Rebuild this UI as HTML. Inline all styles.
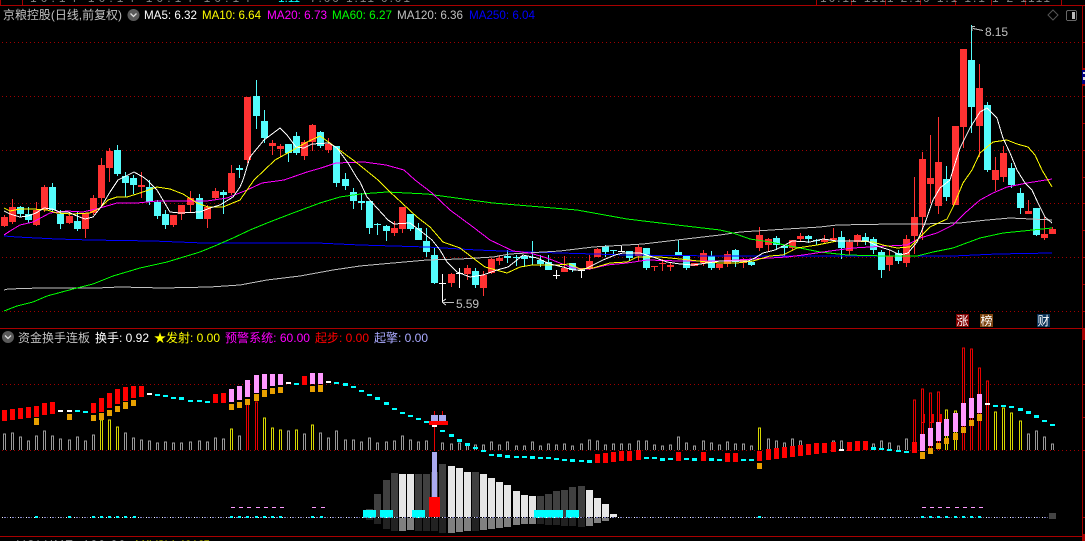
<!DOCTYPE html>
<html><head><meta charset="utf-8"><style>
html,body{margin:0;padding:0;background:#000;width:1085px;height:541px;overflow:hidden}
svg{display:block}
text{font-family:"Liberation Sans","WenQuanYi Zen Hei","Noto Sans CJK SC",sans-serif;font-size:12px}
</style></head><body>
<svg width="1085" height="541" viewBox="0 0 1085 541" xmlns="http://www.w3.org/2000/svg">
<defs>
<pattern id="g" x="2" y="0" width="4" height="1" patternUnits="userSpaceOnUse"><rect x="0" y="0" width="1" height="1" fill="#a00000"/></pattern>
<pattern id="b" x="0" y="0" width="8" height="1" patternUnits="userSpaceOnUse"><rect x="2" y="0" width="1" height="1" fill="#fff"/><rect x="4" y="0" width="2" height="1" fill="#8080c8"/><rect x="7" y="0" width="1" height="1" fill="#606080"/></pattern>
</defs>
<rect width="1085" height="541" fill="#000"/>
<g shape-rendering="crispEdges">
<!-- frame -->
<path d="M0 5.5H1085M0.5 0V5M22.5 0V5M816.5 0V5M851.5 0V5M885.5 0V5M920.5 0V5M955.5 0V5M991.5 0V5M1025.5 0V5M1061.5 0V5M0 328.5H1082M0 536.5H1085M1082.5 5V541" stroke="#a80000" fill="none"/>
<path d="M1083 328h2v12h-2zM1083 534h2v7h-2zM1082 68h3v2h-3zM1082 84h3v2h-3z" fill="#a80000"/>
<rect x="1082" y="70" width="3" height="14" fill="#000080"/><rect x="1083" y="72" width="2" height="2" fill="#ddd"/><rect x="1083" y="77" width="2" height="3" fill="#ddd"/>
<!-- grid -->
<rect x="2" y="42" width="1080" height="1" fill="url(#g)"/>
<rect x="2" y="96" width="1080" height="1" fill="url(#g)"/>
<rect x="2" y="150" width="1080" height="1" fill="url(#g)"/>
<rect x="2" y="203" width="1080" height="1" fill="url(#g)"/>
<rect x="2" y="257" width="1080" height="1" fill="url(#g)"/>
<rect x="2" y="311" width="1080" height="1" fill="url(#g)"/>
<rect x="2" y="384" width="1080" height="1" fill="url(#g)"/>
<rect x="2" y="450" width="1080" height="1" fill="url(#g)"/>
<path d="M1083 42.5h2M1083 69.5h2M1083 96.5h2M1083 123.5h2M1083 150.5h2M1083 177.5h2M1083 203.5h2M1083 230.5h2M1083 257.5h2M1083 284.5h2M1083 311.5h2M1083 384.5h2M1083 417.5h2M1083 450.5h2M1083 517.5h2" stroke="#a00000" fill="none"/>

<!-- red wicks -->
<path stroke="#ff3232" fill="none" d="M4.5 215V227M12.5 199V224M36.5 202V226M44.5 185V212M69.5 212V224M85.5 213V238M93.5 195V215M101.5 158V208M109.5 148V182M141.5 172V198M173.5 215V227M181.5 205V220M190.5 191V212M207.5 205V228M215.5 188V200M231.5 165V195M247.5 97V163M272.5 140V155M280.5 144V157M304.5 140V160M312.5 124V151M328.5 138V153M394.5 221V236M402.5 207V233M451.5 273V287M467.5 265V280M483.5 271V296M491.5 258V274M499.5 255V265M564.5 256V272M589.5 255V270M597.5 248V257M638.5 244V261M654.5 266V271M662.5 259V271M670.5 262V271M694.5 263V266M703.5 250V266M719.5 264V270M727.5 251V267M743.5 258V268M759.5 227V251M768.5 238V251M792.5 240V251M800.5 233V241M824.5 235V243M833.5 228V240M849.5 239V255M857.5 234V246M889.5 250V271M906.5 235V267M914.5 177V254M922.5 152V240M930.5 135V203M938.5 117V214M955.5 126V205M963.5 49V148M979.5 64V157M995.5 157V191M1003.5 146V182M1028.5 200V214M1044.5 217V240M1052.5 227V234"/>
<!-- red bodies -->
<path fill="#ff3232" d="M1 217h7v9h-7zM9 207h7v15h-7zM33 210h7v15h-7zM41 187h7v23h-7zM66 216h7v7h-7zM82 213h7v16h-7zM90 198h7v15h-7zM98 165h7v33h-7zM106 151h7v17h-7zM138 185h7v2h-7zM170 215h7v10h-7zM178 205h7v9h-7zM187 198h7v7h-7zM204 207h7v12h-7zM212 191h7v7h-7zM228 173h7v20h-7zM244 97h7v63h-7zM269 143h7v3h-7zM277 146h7v3h-7zM301 142h7v14h-7zM309 125h7v17h-7zM325 144h7v6h-7zM391 228h7v5h-7zM399 207h7v22h-7zM448 274h7v9h-7zM464 268h7v6h-7zM480 275h7v13h-7zM488 259h7v14h-7zM496 258h7v3h-7zM561 268h7v4h-7zM586 261h7v7h-7zM594 249h7v8h-7zM635 247h7v9h-7zM651 266h7v1h-7zM659 263h7v1h-7zM667 265h7v2h-7zM691 263h7v3h-7zM700 253h7v10h-7zM716 264h7v4h-7zM724 254h7v10h-7zM740 259h7v4h-7zM756 235h7v13h-7zM765 239h7v6h-7zM789 240h7v8h-7zM797 236h7v3h-7zM821 239h7v3h-7zM830 238h7v2h-7zM846 242h7v9h-7zM854 235h7v7h-7zM886 256h7v9h-7zM903 239h7v24h-7zM911 217h7v19h-7zM919 159h7v58h-7zM927 178h7v6h-7zM935 162h7v44h-7zM952 126h7v79h-7zM960 49h7v78h-7zM976 88h7v38h-7zM992 170h7v10h-7zM1000 153h7v24h-7zM1025 211h7v3h-7zM1041 234h7v4h-7zM1049 229h7v5h-7z"/>
<!-- cyan wicks -->
<path stroke="#54fcfc" fill="none" d="M20.5 206V217M28.5 207V223M52.5 183V212M60.5 210V229M77.5 212V231M117.5 145V176M125.5 172V197M133.5 175V194M149.5 180V205M157.5 200V219M165.5 210V229M199.5 194V219M223.5 190V214M239.5 165V178M256.5 80V129M264.5 110V143M288.5 144V162M296.5 132V155M320.5 131V148M336.5 146V187M345.5 173V190M353.5 188V209M361.5 193V210M369.5 201V234M377.5 223V235M386.5 225V241M410.5 214V231M418.5 223V240M426.5 228V257M434.5 248V284M475.5 268V288M507.5 250V263M516.5 255V266M524.5 255V267M532.5 241V265M540.5 255V267M548.5 255V270M572.5 263V272M605.5 245V257M613.5 250V256M629.5 251V261M646.5 248V270M678.5 240V255M686.5 255V270M711.5 251V270M735.5 249V267M751.5 261V266M776.5 236V250M784.5 245V257M808.5 235V243M816.5 239V245M841.5 231V259M865.5 233V245M873.5 237V254M881.5 250V278M898.5 250V264M946.5 166V201M971.5 25V133M987.5 102V172M1011.5 163V188M1020.5 188V214M1036.5 208V236"/>
<!-- cyan bodies -->
<path fill="#54fcfc" d="M17 207h7v7h-7zM25 214h7v6h-7zM49 187h7v23h-7zM57 214h7v10h-7zM74 221h7v8h-7zM114 150h7v24h-7zM122 176h7v7h-7zM130 178h7v7h-7zM146 187h7v15h-7zM154 202h7v14h-7zM162 214h7v11h-7zM196 198h7v21h-7zM220 192h7v3h-7zM236 168h7v2h-7zM253 96h7v20h-7zM261 121h7v17h-7zM285 144h7v9h-7zM293 136h7v17h-7zM317 132h7v14h-7zM333 146h7v37h-7zM342 179h7v7h-7zM350 192h7v9h-7zM358 201h7v2h-7zM366 201h7v27h-7zM374 224h7v1h-7zM383 226h7v5h-7zM407 214h7v15h-7zM415 228h7v12h-7zM423 241h7v11h-7zM431 255h7v28h-7zM472 271h7v14h-7zM504 256h7v2h-7zM513 257h7v1h-7zM521 256h7v3h-7zM529 257h7v1h-7zM537 260h7v4h-7zM545 262h7v8h-7zM569 263h7v7h-7zM602 246h7v6h-7zM610 250h7v1h-7zM626 251h7v7h-7zM643 248h7v20h-7zM675 252h7v3h-7zM683 256h7v12h-7zM708 256h7v12h-7zM732 250h7v12h-7zM748 262h7v3h-7zM773 238h7v7h-7zM781 246h7v2h-7zM805 236h7v3h-7zM813 240h7v1h-7zM838 237h7v11h-7zM862 237h7v5h-7zM870 239h7v11h-7zM878 252h7v18h-7zM895 253h7v8h-7zM943 179h7v18h-7zM968 60h7v47h-7zM984 105h7v65h-7zM1008 168h7v17h-7zM1017 193h7v15h-7zM1033 208h7v27h-7z"/>
<!-- white cross candles -->
<path stroke="#fff" fill="none" d="M442.5 274V302M439 283.5h7M459.5 268V288M456 273.5h7M556.5 270V279M553 275.5h7M581.5 268V278M578 270.5h7M621.5 245V252M618 251.5h7"/>

<!-- MA250 -->
<polyline fill="none" stroke="#0000ff" points="4,236 17,237 57,239 90,240 153,241 203,243 317,243 360,245 427,247 477,250 527,252 627,255 720,256 953,256 997,254 1052,253"/>
<!-- MA120 -->
<polyline fill="none" stroke="#c0c0c0" points="4,290 8,289 40,288 97,288 120,287 163,288 210,287 240,285 267,280 300,276 333,270 360,266 393,263 427,260 460,259 493,257 510,254 560,251 593,247 643,244 677,240 720,235 740,232 787,229 820,227 837,225 893,224 920,224 960,223 987,220 1010,218 1052,220"/>
<!-- MA60 -->
<polyline fill="none" stroke="#00ff00" points="4,311 17,306 33,302 47,296 73,289 93,284 113,276 140,268 167,262 200,252 217,245 233,238 250,230 267,223 293,213 320,203 340,197 360,194 387,192 427,194 493,203 577,210 627,219 677,225 720,230 733,233 750,239 770,242 800,248 820,252 847,255 887,256 917,256 933,252 953,248 980,238 1003,233 1023,231 1052,228"/>
<!-- MA20 -->
<polyline fill="none" stroke="#ff00ff" points="4,235 10,231 20,225 33,222 50,213 67,211 83,212 100,208 117,203 137,203 157,201 187,201 207,201 227,198 247,190 262,183 284,180 307,172 321,168 336,163 364,162 386,165 404,170 415,180 432,193 450,210 473,227 490,240 513,251 530,253 547,258 560,263 573,268 590,269 607,265 627,263 647,260 680,261 720,261 753,259 787,257 803,255 830,251 853,248 887,246 907,245 920,238 937,233 953,225 965,213 980,200 993,193 1007,187 1027,183 1052,179"/>
<!-- MA10 -->
<polyline fill="none" stroke="#ffff00" points="4,208 10,211 20,209 33,209 47,210 57,213 72,214 90,213 100,208 108,200 117,197 127,197 140,193 157,187 170,189 183,194 197,203 208,207 223,207 240,200 247,190 254,180 275,160 293,150 307,142 320,136 330,143 357,163 378,180 390,192 402,203 417,217 430,227 443,242 460,248 473,258 485,267 507,273 520,267 532,265 557,265 570,264 580,269 593,268 610,263 627,262 637,257 660,257 680,259 707,262 720,263 737,263 753,261 770,256 783,255 797,248 817,245 837,241 857,241 873,242 883,245 897,248 910,247 917,240 930,227 947,219 953,207 963,183 972,170 980,153 993,142 1007,140 1017,144 1028,147 1035,155 1042,170 1052,187"/>
<!-- MA5 -->
<polyline fill="none" stroke="#ffffff" points="4,211 10,214 20,217 28,216 36,213 44,208 52,209 60,212 68,212 77,216 85,219 93,217 101,207 110,192 118,180 134,172 143,177 147,180 157,190 170,212 180,213 200,212 210,208 220,205 233,197 240,187 243,180 250,157 264,140 280,128 287,135 296,147 304,148 312,144 329,143 337,148 348,163 357,178 360,182 367,197 377,208 388,220 394,224 410,223 422,232 432,240 440,250 447,262 457,272 470,277 483,275 497,270 508,267 517,260 523,255 537,258 550,264 563,267 573,270 583,270 593,265 603,260 615,255 623,253 640,253 653,257 667,262 680,264 693,265 707,263 720,261 733,261 748,261 755,258 763,253 775,250 785,245 792,241 810,242 823,239 837,241 853,241 867,241 880,247 890,250 900,255 908,253 917,242 925,223 933,200 940,188 950,180 953,170 960,148 970,128 980,112 987,108 997,118 1003,138 1010,153 1017,170 1025,183 1032,190 1038,203 1045,217 1052,223"/>

<!-- high/low arrows -->
<path stroke="#c0c0c0" fill="none" d="M972 26.5h3M972 26V31M973 28.5l10 2M442.5 302V303M443 302.5h11M443 301l3-2M443 303l3 2"/>

<!-- tags -->
<rect x="956" y="314" width="13" height="13" fill="#800000"/><rect x="980" y="314" width="13" height="13" fill="#7c4410"/><rect x="1037" y="314" width="13" height="13" fill="#0c3458"/>

<!-- icons -->
<path d="M1053 10l5 5-5 5-5-5z" stroke="#555" fill="none" shape-rendering="auto"/>
<rect x="1066.5" y="10.5" width="10" height="10" rx="1.5" stroke="#666" fill="none"/><rect x="1072" y="12" width="3" height="7" fill="#bbb"/>

<!-- indicator outline bars -->
<path stroke="#999" fill="none" d="M3.5 450V434h2v16M11.5 450V433h2v17M19.5 450V437h2v13M27.5 450V441h2v9M35.5 450V436h2v14M43.5 450V431h2v19M51.5 450V436h2v14M59.5 450V439h2v11M68.5 450V440h2v10M76.5 450V437h2v13M84.5 450V441h2v9M92.5 450V435h2v15M124.5 450V433h2v17M132.5 450V438h2v12M140.5 450V440h2v10M148.5 450V441h2v9M156.5 450V443h2v7M164.5 450V442h2v8M172.5 450V443h2v7M180.5 450V443h2v7M189.5 450V442h2v8M198.5 450V441h2v9M206.5 450V442h2v8M214.5 450V438h2v12M222.5 450V439h2v11M238.5 450V436h2v14M287.5 450V431h2v19M303.5 450V434h2v16M319.5 450V433h2v17M327.5 450V438h2v12M335.5 450V431h2v19M344.5 450V440h2v10M352.5 450V440h2v10M360.5 450V442h2v8M368.5 450V438h2v12M376.5 450V443h2v7M385.5 450V442h2v8M393.5 450V441h2v9M401.5 450V436h2v14M409.5 450V440h2v10M417.5 450V442h2v8M425.5 450V441h2v9M441.5 450V443h2v7M450.5 450V444h2v6M458.5 450V443h2v7M466.5 450V445h2v5M474.5 450V445h2v5M482.5 450V445h2v5M490.5 450V442h2v8M498.5 450V445h2v5M506.5 450V442h2v8M515.5 450V446h2v4M523.5 450V446h2v4M531.5 450V442h2v8M539.5 450V446h2v4M547.5 450V444h2v6M555.5 450V445h2v5M563.5 450V444h2v6M571.5 450V446h2v4M580.5 450V444h2v6M588.5 450V440h2v10M596.5 450V441h2v9M604.5 450V445h2v5M612.5 450V444h2v6M620.5 450V444h2v6M628.5 450V444h2v6M637.5 450V441h2v9M645.5 450V441h2v9M653.5 450V445h2v5M661.5 450V446h2v4M669.5 450V445h2v5M677.5 450V437h2v13M685.5 450V443h2v7M693.5 450V446h2v4M702.5 450V441h2v9M710.5 450V443h2v7M718.5 450V445h2v5M726.5 450V442h2v8M734.5 450V444h2v6M742.5 450V444h2v6M750.5 450V446h2v4M767.5 450V439h2v11M775.5 450V441h2v9M783.5 450V443h2v7M791.5 450V439h2v11M799.5 450V441h2v9M807.5 450V445h2v5M815.5 450V445h2v5M823.5 450V445h2v5M832.5 450V441h2v9M840.5 450V441h2v9M848.5 450V445h2v5M856.5 450V445h2v5M864.5 450V445h2v5M872.5 450V444h2v6M880.5 450V441h2v9M888.5 450V443h2v7M897.5 450V446h2v4M905.5 450V439h2v11M1027.5 450V434h2v16M1035.5 450V431h2v19M1043.5 450V437h2v13M1051.5 450V444h2v6"/>
<path stroke="#d8d800" fill="none" d="M100.5 450V420h2v30M108.5 450V420h2v30M116.5 450V427h2v23M230.5 450V429h2v21M263.5 450V418h2v32M271.5 450V428h2v22M279.5 450V430h2v20M295.5 450V430h2v20M311.5 450V425h2v25M758.5 450V428h2v22M945.5 450V410h2v40M954.5 450V411h2v39M994.5 450V412h2v38M1002.5 450V408h2v42M1010.5 450V413h2v37M1019.5 450V421h2v29"/>
<path stroke="#e80000" fill="none" d="M246.5 450V400h2v50M255.5 450V402h2v48M913.5 450V400h2v50M921.5 450V389h2v61M929.5 450V393h2v57M937.5 450V392h2v58M962.5 450V348h2v102M970.5 450V349h2v101M978.5 450V368h2v82M986.5 450V381h2v69M434.5 411V451M442.5 411V415"/>
<path fill="#e80000" d="M923 414h2v8h-2zM921 422h4v1h-4zM932 414h2v8h-2zM930 422h4v1h-4zM940 414h2v8h-2zM938 422h4v1h-4zM965 414h1v8h-1zM963 422h3v1h-3z"/>

<!-- indicator red blocks -->
<path fill="#ff0000" d="M2 410h5v11h-5zM10 409h5v11h-5zM18 408h5v11h-5zM26 407h5v11h-5zM34 406h5v11h-5zM42 403h5v12h-5zM50 402h5v12h-5zM91 403h5v10h-5zM99 398h5v14h-5zM107 393h5v15h-5zM115 389h5v15h-5zM123 387h5v14h-5zM131 386h5v12h-5zM139 386h5v11h-5zM213 394h5v9h-5zM221 393h5v10h-5zM302 376h5v9h-5zM595 454h5v9h-5zM603 453h5v10h-5zM611 452h5v10h-5zM619 451h5v10h-5zM627 451h5v10h-5zM636 450h5v10h-5zM676 452h5v9h-5zM701 452h5v9h-5zM725 453h5v9h-5zM733 453h5v9h-5zM757 451h5v10h-5zM766 449h5v11h-5zM774 448h5v11h-5zM782 447h5v11h-5zM790 446h5v11h-5zM798 445h5v11h-5zM806 444h5v11h-5zM814 443h5v11h-5zM822 443h5v10h-5zM831 442h5v10h-5zM847 442h5v9h-5zM855 441h5v10h-5zM863 441h5v9h-5zM912 442h5v11h-5z"/>
<!-- orange -->
<path fill="#e8a000" d="M34 418h5v7h-5zM67 414h5v6h-5zM91 415h5v6h-5zM99 413h5v7h-5zM107 410h5v6h-5zM115 406h5v6h-5zM123 402h5v7h-5zM131 400h5v6h-5zM229 404h5v6h-5zM237 402h5v6h-5zM245 399h5v6h-5zM254 394h5v7h-5zM262 390h5v7h-5zM270 388h5v6h-5zM278 387h5v6h-5zM310 386h5v6h-5zM318 385h5v7h-5zM757 463h5v6h-5zM920 452h5v7h-5zM928 448h5v6h-5zM936 443h5v6h-5zM944 438h5v6h-5zM953 433h5v7h-5zM961 427h5v6h-5zM969 420h5v6h-5zM977 414h5v7h-5z"/>
<!-- pink -->
<path fill="#ff99ff" d="M229 389h5v13h-5zM237 386h5v14h-5zM245 380h5v17h-5zM254 375h5v18h-5zM262 374h5v15h-5zM270 374h5v12h-5zM278 374h5v11h-5zM310 373h5v11h-5zM318 373h5v11h-5zM920 434h5v17h-5zM928 428h5v18h-5zM936 422h5v19h-5zM944 419h5v17h-5zM953 413h5v19h-5zM961 403h5v23h-5zM969 398h5v20h-5zM977 394h5v19h-5z"/>
<!-- cyan dashes -->
<path stroke="#00ffff" stroke-width="2" fill="none" d="M75 411h5M83 412h5M155 395h5M163 396h5M171 398h5M188 401h5M197 401h5M205 402h5M294 384h5M334 383h5M351 387h5M359 391h5M367 395h5M392 409h5M400 413h5M408 416h5M416 419h5M424 422h5M440 431h5M473 448h5M481 451h5M489 455h5M514 457h5M522 457h5M538 458h5M546 458h5M554 459h5M562 460h5M579 461h5M644 458h5M652 458h5M668 459h5M684 459h5M717 460h5M741 460h5M749 460h5M879 449h5M887 450h5M896 451h5M904 452h5M993 406h5M1001 406h5M1009 407h5M1042 421h5M1050 425h5"/>
<path stroke="#00ffff" stroke-width="3" fill="none" d="M179 398.5h5M343 384.5h5M375 398.5h5M384 403.5h5M449 435.5h5M457 440.5h5M465 444.5h5M497 455.5h5M505 456.5h5M530 457.5h5M570 460.5h5M587 461.5h5M660 459.5h5M692 459.5h5M709 459.5h5M871 448.5h5M1018 409.5h5M1026 412.5h5M1034 416.5h5"/>
<path stroke="#fff" stroke-width="2" fill="none" d="M58 411h5M67 411h5M147 394h5M286 383h5M326 382h5M432 426h5M839 450h5M985 404h5"/>

<!-- histogram -->
<path fill="#404040" d="M366 509h7v8h-7zM374 494h7v23h-7zM383 480h7v37h-7zM391 473h7v44h-7zM415 474h7v43h-7zM423 474h7v43h-7zM431 472h7v45h-7zM439 464h7v53h-7zM472 472h7v45h-7zM537 496h7v21h-7zM545 494h7v23h-7zM553 491h7v26h-7zM561 490h7v27h-7zM569 487h7v30h-7zM578 486h7v31h-7z"/>
<path fill="#e6e6e6" d="M399 474h7v43h-7zM407 474h7v43h-7zM448 466h7v51h-7zM456 468h7v49h-7zM464 472h7v45h-7zM480 474h7v43h-7zM488 478h7v39h-7zM496 482h7v35h-7zM504 485h7v32h-7zM513 491h7v26h-7zM521 495h7v22h-7zM529 496h7v21h-7zM586 490h7v27h-7zM594 498h7v19h-7zM602 504h7v13h-7zM610 514h7v3h-7z"/>
<path fill="#808080" d="M399 518h7v13h-7zM407 518h7v12h-7zM448 518h7v15h-7zM456 518h7v14h-7zM464 518h7v13h-7zM480 518h7v12h-7zM488 518h7v11h-7zM496 518h7v10h-7zM504 518h7v9h-7zM513 518h7v7h-7zM521 518h7v6h-7zM529 518h7v6h-7zM586 518h7v8h-7zM594 518h7v5h-7zM602 518h7v3h-7z"/>
<path fill="#222" d="M366 518h7v2h-7zM374 518h7v6h-7zM383 518h7v11h-7zM391 518h7v13h-7zM415 518h7v13h-7zM423 518h7v13h-7zM431 518h7v13h-7zM439 518h7v15h-7zM472 518h7v13h-7zM537 518h7v6h-7zM545 518h7v7h-7zM553 518h7v7h-7zM561 518h7v8h-7zM569 518h7v8h-7zM578 518h7v9h-7z"/>
<path fill="#00ffff" d="M363 510h13v8h-13zM380 510h13v8h-13zM412 510h13v8h-13zM534 510h29v8h-29zM566 510h13v8h-13z"/>
<!-- special column -->
<path fill="#aaaaf0" d="M431 415h7v6h-7zM439 415h7v6h-7zM432 452h5v45h-5z"/>
<path fill="#ff0000" d="M429 421h19v4h-19zM429 497h11v20h-11z"/>
<rect x="432" y="425" width="5" height="1" fill="#fff"/>
<!-- baseline -->
<rect x="0" y="517" width="1050" height="1" fill="url(#b)"/>
<rect x="1049" y="513" width="7" height="6" fill="#444"/>
<path fill="#00ffff" d="M35 516h3v2h-3zM68 516h3v2h-3zM92 516h3v2h-3zM100 516h3v2h-3zM108 516h3v2h-3zM116 516h3v2h-3zM124 516h3v2h-3zM133 516h3v2h-3zM230 516h3v2h-3zM238 516h3v2h-3zM246 516h3v2h-3zM255 516h3v2h-3zM263 516h3v2h-3zM271 516h3v2h-3zM279 516h3v2h-3zM311 516h3v2h-3zM320 516h3v2h-3zM758 516h3v2h-3zM921 516h3v2h-3zM929 516h3v2h-3zM937 516h3v2h-3zM945 516h3v2h-3zM954 516h3v2h-3zM962 516h3v2h-3zM970 516h3v2h-3zM978 516h3v2h-3z"/>
<path stroke="#ff99ff" fill="none" d="M231 507.5h4M239 507.5h4M247 507.5h4M256 507.5h4M264 507.5h4M272 507.5h4M280 507.5h4M312 507.5h4M321 507.5h4M922 507.5h4M930 507.5h4M938 507.5h4M946 507.5h4M955 507.5h4M963 507.5h4M971 507.5h4M979 507.5h4"/>
</g>

<!-- dropdown icons -->
<circle cx="133.5" cy="15" r="6" fill="#5a5a5a"/><path d="M130.5 13.5l3 3 3-3" stroke="#ddd" stroke-width="1.3" fill="none"/>
<circle cx="8" cy="337" r="6" fill="#5a5a5a"/><path d="M5 335.5l3 3 3-3" stroke="#ddd" stroke-width="1.3" fill="none"/>
<circle cx="8" cy="548" r="6" fill="#5a5a5a"/>

<!-- top strip fragments -->
<text x="30" y="2" fill="#888" textLength="220" lengthAdjust="spacing">10:14  10:14  10:14  10:14</text>
<text x="278" y="2" fill="#0ff" textLength="22" lengthAdjust="spacing">1.11</text>
<text x="310" y="2" fill="#888" textLength="100" lengthAdjust="spacing">7.00 1.11 0.01</text>
<text x="820" y="2" fill="#888" textLength="230" lengthAdjust="spacing">10.11  1111  2.10  1.1  1.1  1-2  1111</text>

<!-- header -->
<text x="3" y="19" fill="#c0c0c0" textLength="119" lengthAdjust="spacingAndGlyphs">京粮控股(日线,前复权)</text>
<text x="144" y="19" fill="#ffffff" textLength="53" lengthAdjust="spacingAndGlyphs">MA5: 6.32</text>
<text x="202" y="19" fill="#ffff00" textLength="59" lengthAdjust="spacingAndGlyphs">MA10: 6.64</text>
<text x="267" y="19" fill="#ff00ff" textLength="60" lengthAdjust="spacingAndGlyphs">MA20: 6.73</text>
<text x="332" y="19" fill="#00ff00" textLength="60" lengthAdjust="spacingAndGlyphs">MA60: 6.27</text>
<text x="397" y="19" fill="#c0c0c0" textLength="66" lengthAdjust="spacingAndGlyphs">MA120: 6.36</text>
<text x="469" y="19" fill="#0000ff" textLength="66" lengthAdjust="spacingAndGlyphs">MA250: 6.04</text>

<text x="985" y="36" fill="#c0c0c0" textLength="23" lengthAdjust="spacing">8.15</text>
<text x="456" y="308" fill="#c0c0c0" textLength="23" lengthAdjust="spacing">5.59</text>

<text x="956.5" y="325" fill="#fff" textLength="12" lengthAdjust="spacingAndGlyphs">涨</text>
<text x="980.5" y="325" fill="#fff" textLength="12" lengthAdjust="spacingAndGlyphs">榜</text>
<text x="1037.5" y="325" fill="#fff" textLength="12" lengthAdjust="spacingAndGlyphs">财</text>

<!-- indicator header -->
<text x="18" y="342" fill="#c0c0c0" textLength="72" lengthAdjust="spacingAndGlyphs">资金换手连板</text>
<text x="95" y="342" fill="#fff" textLength="54" lengthAdjust="spacingAndGlyphs">换手: 0.92</text>
<text x="154" y="342" fill="#ffff00" textLength="66" lengthAdjust="spacingAndGlyphs">★发射: 0.00</text>
<text x="225" y="342" fill="#ff00ff" textLength="85" lengthAdjust="spacingAndGlyphs">预警系统: 60.00</text>
<text x="315" y="342" fill="#ff0000" textLength="54" lengthAdjust="spacingAndGlyphs">起步: 0.00</text>
<text x="374" y="342" fill="#aaaaff" textLength="54" lengthAdjust="spacingAndGlyphs">起擎: 0.00</text>

<!-- bottom clipped -->
<text x="17" y="549" fill="#fff" textLength="108" lengthAdjust="spacing">VOLUME: 130.26</text>
<text x="135" y="549" fill="#ffff00" textLength="75" lengthAdjust="spacing">MAVOL1: 104.85</text>
</svg>
</body></html>
